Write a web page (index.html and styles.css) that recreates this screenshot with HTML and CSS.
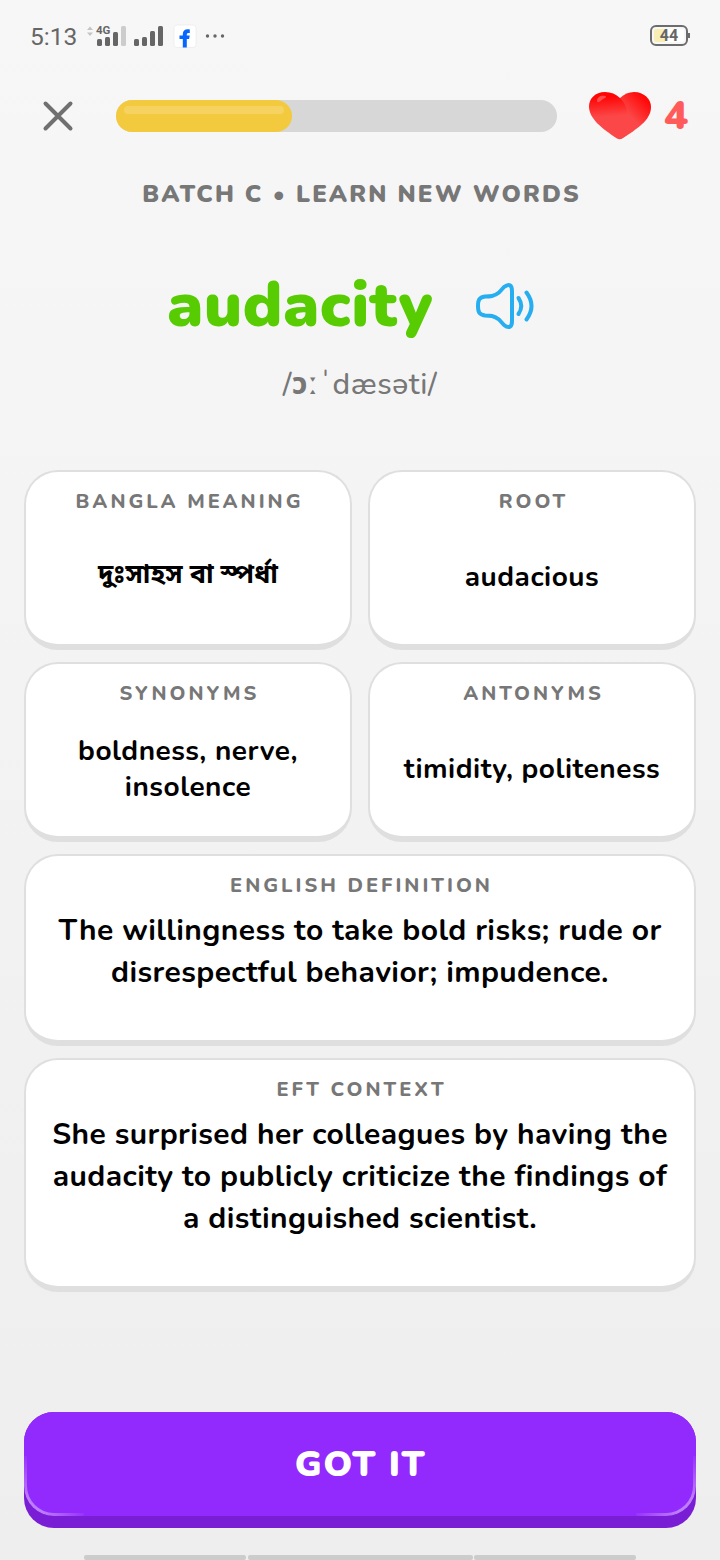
FILE: index.html
```html
<!DOCTYPE html>
<html lang="en">
<head>
    <meta charset="UTF-8">
    <meta name="viewport" content="width=device-width, initial-scale=1.0">
    <title>Learn New Words</title>
    <link rel="stylesheet" href="styles.css">
</head>
<body>
    <div class="status-bar">
        <span class="clock">5:13</span>
        <svg class="signals" width="140" height="30" viewBox="0 0 140 30">
            <path d="M0 9l3-3.500 3 3.500zM0 11.500l3 3.500 3-3.500z" fill="#c4c4c4"/>
            <text x="9" y="13" class="net">4G</text>
            <g fill="#666">
                <rect x="10" y="18" width="5" height="7" rx="1.500"/>
                <rect x="18" y="16" width="5" height="9" rx="1.500"/>
                <rect x="26" y="11" width="5" height="14" rx="1.500"/>
                <rect x="47" y="18" width="5" height="7" rx="1.500"/>
                <rect x="55" y="16" width="5" height="9" rx="1.500"/>
                <rect x="63" y="10" width="5" height="15" rx="1.500"/>
                <rect x="71" y="5" width="5" height="20" rx="1.500"/>
            </g>
            <rect x="34" y="5" width="5" height="20" rx="1.500" fill="#ccc"/>
            <rect x="87" y="4" width="22" height="22.500" rx="3" fill="#fff" stroke="#e8e8e8" stroke-width=".6"/>
            <path d="M95.800 26.500V18H92.500v-3.600h3.300v-1.200c0-4 2.600-5.300 7-4.700v3.600c-2.400-.3-3 .2-3 1.600v.7h2.900l-.6 3.600h-2.300v8.500z" fill="#0866ff"/>
            <g fill="#666">
                <circle cx="120.500" cy="15" r="1.700"/>
                <circle cx="128" cy="15" r="1.700"/>
                <circle cx="135.500" cy="15" r="1.700"/>
            </g>
        </svg>
        <div class="battery">44</div>
    </div>

    <div class="top-bar">
        <svg class="close" width="32" height="32" viewBox="0 0 32 32">
            <path d="M3.500 3.500l25 25M28.500 3.500l-25 25" stroke="#707070" stroke-width="4" stroke-linecap="round"/>
        </svg>
        <div class="progress">
            <div class="progress-fill" style="width: 40%"></div>
        </div>
        <svg class="heart" width="64" height="50" viewBox="0 0 64 50">
            <defs>
                <linearGradient id="heartLeft" gradientUnits="userSpaceOnUse" x1="20" y1="0" x2="22" y2="28">
                    <stop offset=".2" stop-color="#ff0505"/>
                    <stop offset=".9" stop-color="#fb4747"/>
                </linearGradient>
                <linearGradient id="heartRight" gradientUnits="userSpaceOnUse" x1="58" y1="5" x2="40" y2="23">
                    <stop offset=".1" stop-color="#ff0808"/>
                    <stop offset="1" stop-color="#fb4747"/>
                </linearGradient>
            </defs>
            <path d="M32 7C36 3 41 1 46 1c10 0 17 7 17 15 0 13-14 22-29 31.500q-2 1-4 0z" fill="url(#heartRight)"/>
            <path d="M32 7C28 3 23 1 17 1 7 1 1 8 1 15.500 1 28 15 38 29 47.500q2.500 1.500 5 0L39 44V26C40 18 37 12 32 7z" fill="url(#heartLeft)"/>
            <path d="M9 10c0-4 4-6 8-5 2 .5 1 2-1 2.500-2 .5-3 3-5 3.500-1 .5-2 0-2-1z" fill="#ff4d4d"/>
        </svg>
        <span class="lives">4</span>
    </div>

    <div class="batch">BATCH C • LEARN NEW WORDS</div>

    <div class="word-row">
        <h1 class="word">audacity</h1>
        <svg class="speaker" width="60" height="50" viewBox="0 0 60 50" fill="none" stroke="#26aef0" stroke-width="4" stroke-linecap="round" stroke-linejoin="round">
            <path d="M3 25c0-6 1-8.500 7-9.500 5 0 9 0 14-4l5-5.500c5-4 8-2 8 4v30c0 6-3 8-8 4l-5-5.500c-5-4-9-4-14-4-6-1-7-3.500-7-9.500z"/>
            <path d="M43.500 17q5.500 8 0 16"/>
            <path d="M51.500 11.500q10 13.500 0 27"/>
        </svg>
    </div>
    <div class="phonetic">/<b>ɔ</b>ː<span class="stress">ˈ</span>dæsəti/</div>

    <div class="cards">
        <div class="card">
            <div class="label">BANGLA MEANING</div>
            <div class="value bangla" lang="bn">দুঃসাহস বা স্পর্ধা</div>
        </div>
        <div class="card">
            <div class="label">ROOT</div>
            <div class="value">audacious</div>
        </div>
        <div class="card">
            <div class="label">SYNONYMS</div>
            <div class="value">boldness, nerve,<br>insolence</div>
        </div>
        <div class="card">
            <div class="label">ANTONYMS</div>
            <div class="value">timidity, politeness</div>
        </div>
        <div class="card wide">
            <div class="label">ENGLISH DEFINITION</div>
            <div class="value">The willingness to take bold risks; rude or<br>disrespectful behavior; impudence.</div>
        </div>
        <div class="card wide">
            <div class="label">EFT CONTEXT</div>
            <div class="value">She surprised her colleagues by having the<br>audacity to publicly criticize the findings of<br>a distinguished scientist.</div>
        </div>
    </div>

    <button class="got-it">GOT IT</button>

    <div class="nav-hint">
        <span></span>
        <span></span>
        <span></span>
    </div>
</body>
</html>
```
FILE: styles.css
```css
* {
    box-sizing: border-box;
}

body {
    display: flex;
    flex-direction: column;
    width: 720px;
    height: 1560px;
    margin: 0;
    overflow: hidden;
    background: linear-gradient(#f7f7f7, #eeeeee);
    font-family: Nunito, Lato, sans-serif;
    color: #000;
}

.status-bar {
    display: flex;
    align-items: center;
    height: 72px;
    padding: 0 29px 0 30px;
}

.clock {
    width: 57px;
    padding-top: 1px;
    font-family: Roboto, sans-serif;
    font-size: 24.5px;
    color: #666;
}

.net {
    font: bold 11.5px Roboto, sans-serif;
    fill: #666;
}

.battery {
    position: relative;
    width: 38px;
    height: 21px;
    margin: 0 3px 1px auto;
    padding: 2px;
    border: 2px solid #6c6c6c;
    border-radius: 6px;
    background: linear-gradient(90deg, #f8eeb4 13px, #fff 13px);
    background-clip: content-box;
    font: bold 16px/14px Roboto, sans-serif;
    text-align: center;
    color: #666;
}

.battery::after {
    content: "";
    position: absolute;
    right: -4px;
    top: 6px;
    width: 2px;
    height: 5px;
    background: #6c6c6c;
}

.top-bar {
    display: flex;
    align-items: center;
    height: 88px;
    padding: 0 32px 0 42px;
}

.progress {
    width: 441px;
    height: 32px;
    margin-left: 42px;
    border-radius: 16px;
    background: #d7d7d7;
}

.progress-fill {
    height: 32px;
    padding: 6px 8px;
    border-radius: 16px;
    background: #f3ca3e;
}

.progress-fill::before {
    content: "";
    display: block;
    height: 8px;
    border-radius: 4px;
    background: #f6d360;
}

.heart {
    margin-left: 31px;
}

.lives {
    margin-left: 12px;
    font-size: 40px;
    font-weight: 900;
    color: #ff5b5b;
}

.batch {
    height: 68px;
    padding-left: 3px;
    line-height: 69px;
    text-align: center;
    font-size: 24px;
    font-weight: 900;
    letter-spacing: 2.1px;
    color: #777;
}

.word-row {
    display: flex;
    align-items: center;
    height: 130px;
    margin-top: 12px;
    padding-left: 167px;
}

.word {
    width: 308px;
    margin: 0;
    font-size: 64px;
    line-height: 80px;
    font-weight: 900;
    letter-spacing: 0.5px;
    color: #58cc02;
}

.speaker {
    margin-top: 2px;
}

.phonetic {
    height: 100px;
    padding-top: 1px;
    line-height: 28px;
    text-align: center;
    font-family: Nunito, "Noto Sans", sans-serif;
    font-size: 30px;
    font-weight: 500;
    letter-spacing: 0.6px;
    color: #777;
}

.stress {
    margin-right: -1px;
}

.cards {
    display: grid;
    grid-template-columns: 1fr 1fr;
    grid-template-rows: 180px 180px 192px 234px;
    gap: 12px 16px;
    padding: 0 24px;
}

.card {
    display: flex;
    flex-direction: column;
    padding: 15px 0 7px;
    border: 2px solid #dfdfdf;
    border-bottom-width: 6px;
    border-radius: 34px;
    background: #fff;
    text-align: center;
}

.wide {
    grid-column: span 2;
}

.label {
    padding-left: 3px;
    line-height: 30px;
    font-size: 20px;
    font-weight: 800;
    letter-spacing: 3px;
    color: #777;
}

.value {
    display: flex;
    flex: 1;
    align-items: center;
    justify-content: center;
    font-size: 28px;
    line-height: 36px;
    font-weight: 700;
    letter-spacing: 0.5px;
}

.wide .value {
    display: block;
    padding-top: 9px;
    font-size: 30px;
    line-height: 42px;
    letter-spacing: 0.41px;
}

.value.bangla {
    padding-bottom: 2px;
    font-family: "Noto Sans Bengali", "Noto Serif Bengali", Lato, sans-serif;
    font-size: 27px;
    letter-spacing: 0;
}

.got-it {
    position: relative;
    z-index: 0;
    flex: none;
    height: 116px;
    margin: 120px 24px 0;
    padding: 1px 0 11px 1px;
    border: 0;
    border-radius: 30px;
    background: #7a1ed6;
    font-family: Nunito, Lato, sans-serif;
    font-size: 36px;
    font-weight: 900;
    line-height: 104px;
    letter-spacing: 1.5px;
    color: #fff;
}

/* raised face of the button */
.got-it::before {
    content: "";
    position: absolute;
    inset: 0 0 12px;
    border-radius: 30px;
    background: #9229fd;
    z-index: -1;
}

/* light edge on the two lower corners */
.got-it::after {
    content: "";
    position: absolute;
    inset: 0 0 12px;
    border: 3px solid rgba(255, 255, 255, 0.4);
    border-top: 0;
    border-radius: 30px;
    -webkit-mask:
        radial-gradient(circle at 6px 54px, #000 12px, transparent 60px) 0 100% / 60px 60px no-repeat,
        radial-gradient(circle at 54px 54px, #000 12px, transparent 60px) 100% 100% / 60px 60px no-repeat;
}

.nav-hint {
    display: grid;
    grid-template-columns: 162px 225px 162px;
    gap: 1.5px;
    margin: 27px 84px 0;
}

.nav-hint span {
    height: 5px;
    border-radius: 2px;
    background: #ccc;
}
```
